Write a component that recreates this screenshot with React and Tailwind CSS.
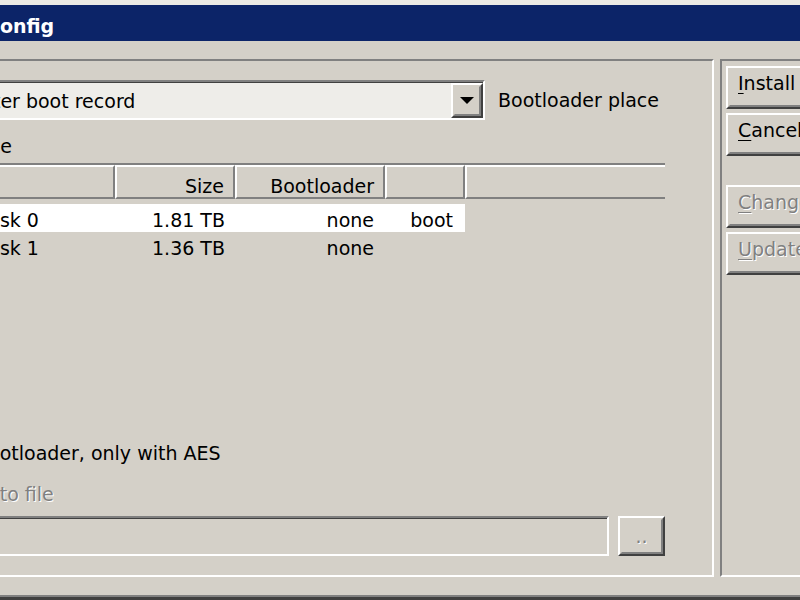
import React from 'react';

// Classic Win2000 bevels, 2x scale (each edge line is 2px)
const RAISED_OUT = 'border-2 border-t-white border-l-white border-r-[#404040] border-b-[#404040]';
const RAISED_IN = 'border-2 border-t-[#d4d0c8] border-l-[#d4d0c8] border-r-[#808080] border-b-[#808080]';
const SUNKEN_OUT = 'border-2 border-t-[#808080] border-l-[#808080] border-r-white border-b-white';
const DISABLED = 'text-[#808080] [text-shadow:1px_1px_0_#ffffff]';

const COLS = [
    { w: 'w-[168px]', head: 'Disk',       align: 'pl-[8px] text-left',  cell: 'pl-[33px] text-left' },
    { w: 'w-[120px]', head: 'Size',       align: 'pr-[9px] text-right', cell: 'pr-[10px] text-right' },
    { w: 'w-[150px]', head: 'Bootloader', align: 'pr-[9px] text-right', cell: 'pr-[11px] text-right' },
    { w: 'w-[80px]',  head: '',           align: 'pr-[9px] text-right', cell: 'pr-[12px] text-right' },
];

const DISKS = [
    ['Disk 0', '1.81 TB', 'none', 'boot'],
    ['Disk 1', '1.36 TB', 'none', ''],
];

function Hotkey({ label }) {
    return (
        <>
            <span className="underline decoration-1 underline-offset-[3px]">{label[0]}</span>
            {label.slice(1)}
        </>
    );
}

function PushButton({ label, disabled, className = '' }) {
    return (
        <div className={`h-[43px] w-[140px] shrink-0 ${RAISED_OUT} ${className}`}>
            <div className={`h-full pl-[8px] pt-[2px] leading-[22px] whitespace-nowrap ${RAISED_IN} ${disabled ? DISABLED : ''}`}>
                <Hotkey label={label} />
            </div>
        </div>
    );
}

function ComboBox() {
    return (
        <div className={`w-[538px] h-[40px] shrink-0 ${SUNKEN_OUT}`}>
            <div className="h-full flex border-t border-l border-t-[#404040] border-l-[#404040] bg-[#eeede9]">
                <div className="flex-1 flex items-center pl-[5px] leading-[22px] whitespace-nowrap">Master boot record</div>
                <div className={`w-[32px] h-full ${RAISED_OUT}`}>
                    <div className={`h-full flex items-center justify-center bg-[#d4d0c8] ${RAISED_IN}`}>
                        <svg width="14" height="7" viewBox="0 0 14 7">
                            <polygon points="0,0 14,0 7,7" fill="#000" />
                        </svg>
                    </div>
                </div>
            </div>
        </div>
    );
}

function DiskList() {
    return (
        <div className="mt-[6px] h-[272px] w-[718px]">
            {/* header */}
            <div className="flex border-t-2 border-t-[#808080]">
                {COLS.map((c, i) => (
                    <div key={i} className={`${c.w} h-[34px] border-2 border-t-white border-l-white border-r-[#808080] border-b-[#808080] pt-[8px] leading-[22px] whitespace-nowrap ${c.align}`}>
                        {c.head}
                    </div>
                ))}
                {/* empty filler after the last column */}
                <div className="w-[200px] h-[34px] border-t-2 border-l-2 border-b-2 border-t-white border-l-white border-b-[#808080]" />
            </div>

            {/* rows */}
            <div className="mt-[5px] flex flex-col">
                {DISKS.map((row, r) => (
                    <div key={r} className={`flex w-[518px] h-[28px] ${r === 0 ? 'bg-white' : ''}`}>
                        {row.map((v, i) => (
                            <div key={i} className={`${COLS[i].w} pt-[5px] leading-[22px] whitespace-nowrap ${COLS[i].cell}`}>
                                {v}
                            </div>
                        ))}
                    </div>
                ))}
            </div>
        </div>
    );
}

function LeftPanel() {
    return (
        <div className={`w-[772px] h-full shrink-0 pl-[3px] flex flex-col ${SUNKEN_OUT}`}>
            <div className="mt-[19px] flex items-center h-[40px]">
                <ComboBox />
                <span className="ml-[13px] leading-[22px] whitespace-nowrap">Bootloader place</span>
            </div>

            <div className="mt-[15px] leading-[22px]">Device</div>

            <DiskList />

            <div className="mt-[7px] h-[22px] flex items-center gap-[2px]">
                <div className={`w-[26px] h-[26px] shrink-0 bg-white ${SUNKEN_OUT}`} />
                <span className="leading-[22px] whitespace-nowrap">Bootloader, only with AES</span>
            </div>

            <div className={`mt-[19px] leading-[22px] ${DISABLED}`}>Save to file</div>

            <div className="mt-[11px] flex gap-[9px] h-[40px]">
                <div className={`w-[662px] h-full ${SUNKEN_OUT}`}>
                    <div className="h-full border-t border-l border-t-[#404040] border-l-[#404040]" />
                </div>
                <div className={`w-[47px] h-full ${RAISED_OUT}`}>
                    <div className={`h-full flex items-center justify-center leading-[22px] ${RAISED_IN} ${DISABLED}`}>..</div>
                </div>
            </div>
        </div>
    );
}

function RightPanel() {
    return (
        <div className={`w-[140px] h-full shrink-0 pl-[4px] pt-[5px] flex flex-col ${SUNKEN_OUT}`}>
            <PushButton label="Install" />
            <PushButton label="Cancel" className="mt-[4px]" />
            <PushButton label="Change" disabled className="mt-[29px]" />
            <PushButton label="Update" disabled className="mt-[4px]" />
        </div>
    );
}

export default function App() {
    return (
        <div className="w-[800px] h-[600px] overflow-hidden bg-[#d4d0c8] text-[19px] text-black font-['DejaVu_Sans',sans-serif]">
            <div className="-ml-[60px] w-[900px] h-full flex flex-col">
                {/* window frame + caption */}
                <div className="h-[5px] bg-[#eceae5]" />
                <div className="h-[36px] bg-[#0c2468] pl-[46px] pt-[10px] leading-[22px] font-bold text-white">Config</div>

                <div className="h-[18px]" />
                <div className="flex h-[518px] pl-[2px] gap-[6px]">
                    <LeftPanel />
                    <RightPanel />
                </div>
                <div className="h-[18px]" />

                <div className="h-[2px] bg-[#808080]" />
                <div className="h-[3px] bg-[#404040]" />
            </div>
        </div>
    );
}
